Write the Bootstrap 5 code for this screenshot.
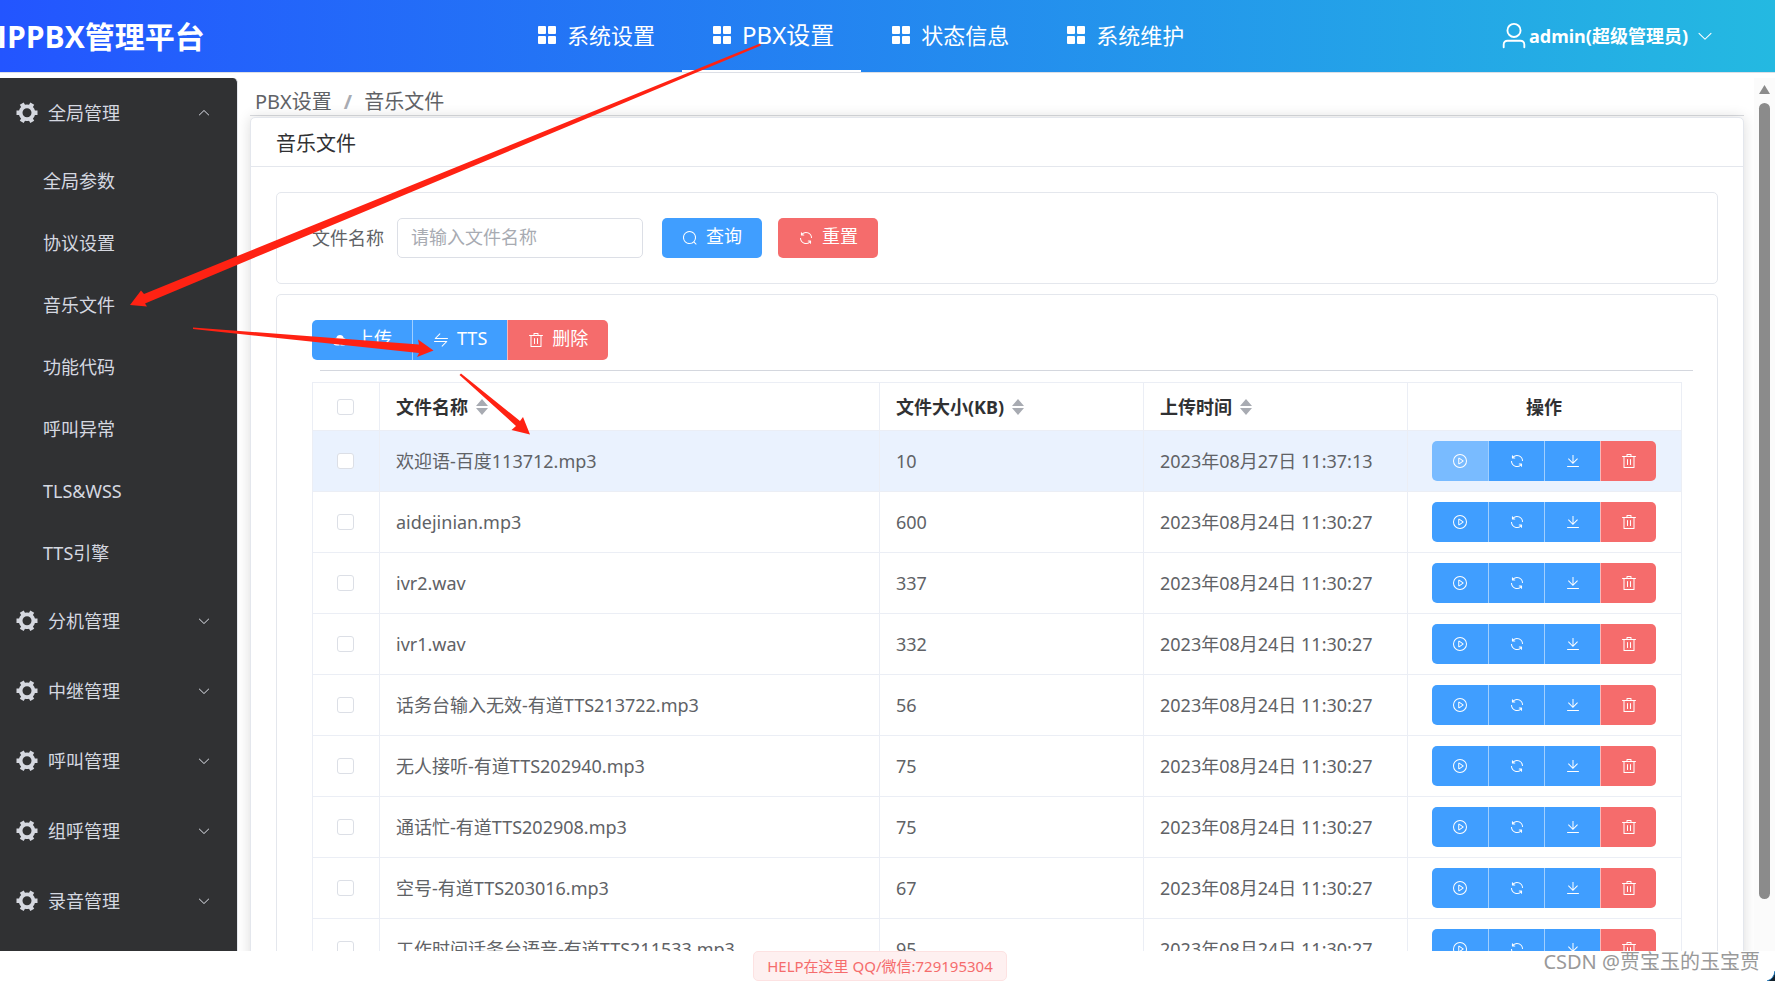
<!DOCTYPE html>
<html lang="zh-CN">
<head>
<meta charset="utf-8">
<meta name="viewport" content="width=device-width, initial-scale=1">
<title>IPPBX管理平台</title>
<link rel="stylesheet" href="https://cdn.jsdelivr.net/npm/bootstrap@5.3.0/dist/css/bootstrap.min.css">
<style>
  :root { --line: #e4e7ed; --blue: #409eff; --red: #f56c6c; --txt: #606266; --dark: #303133; }
  body { font: 18px/24px "Noto Sans", "Noto Sans CJK SC", sans-serif; color: var(--txt); overflow: hidden; background: #fff; }
  svg { fill: currentColor; flex: none; display: block; }
  .ic { width: 18px; height: 18px; }
  .ic-sm { width: 16px; height: 16px; }
  a { text-decoration: none; color: inherit; }

  .topbar { height: 73px; background: linear-gradient(90deg, #2355ff, #24b9e1); border-bottom: 1px solid #dcdfe6; color: #fff; padding-right: 61px; flex: none; }
  .brand { font-family: "Open Sans", "Noto Sans CJK SC", sans-serif; font-size: 30px; line-height: 40px; font-weight: 700; margin-left: -3px; width: 510px; padding-top: 2px; white-space: nowrap; }
  .topnav { font-size: 22px; }
  .topnav a { color: #fff; padding: 0 27px 0 31px; gap: 11px; border-bottom: 2px solid transparent; white-space: nowrap; }
  .topnav a.active { font-size: 24px; border-color: #fff; }
  .user { background: none; border: 0; color: #fff; font-weight: 700; padding: 0; }
  .user .face { width: 30px; height: 30px; }

  .side { width: 238px; background: var(--dark); color: #d5d8e0; border-right: 1px solid var(--line); border-top-right-radius: 5px; overflow: hidden; flex: none; }
  .side button { height: 70px; width: 100%; background: none; border: 0; color: inherit; padding: 0 26px 0 15px; text-align: left; gap: 9px; }
  .side .gear { width: 24px; height: 24px; }
  .side .chev { width: 14px; height: 14px; }
  .side ul { padding: 2px 0; }
  .side li a { display: flex; align-items: center; height: 62px; padding-left: 43px; }

  .crumbs { font-size: 20px; line-height: 28px; padding: 10px 0 0 5px; height: 38px; border-bottom: 1px solid #dadce0; margin-bottom: 1px; }
  .crumbs .breadcrumb-item + .breadcrumb-item { padding-left: 12px; }
  .crumbs .breadcrumb-item + .breadcrumb-item::before { color: #a8abb2; font-weight: 700; padding-right: 12px; }
  .panel { border: 1px solid var(--line); border-radius: 5px; background: #fff; }
  .outer { box-shadow: 0 0 14px rgba(0,0,0,.14); }
  .outer > h1 { font-size: 20px; line-height: 28px; color: var(--dark); font-weight: 400; padding: 12px 25px 8px; margin: 0; border-bottom: 1px solid var(--line); }
  .outer-body { padding: 25px; }
  .searchbox { height: 92px; padding: 0 35px; margin-bottom: 10px; }
  .searchbox input { width: 246px; height: 40px; font-size: 18px; border: 1px solid #dcdfe6; border-radius: 5px; padding: 0 13px 3px; margin: 0 19px 0 13px; color: var(--txt); }
  .searchbox input::placeholder { color: #a8abb2; }
  .act { height: 40px; border: 0; border-radius: 5px; color: #fff; font-size: 18px; line-height: 24px; padding: 0 20px; background: var(--blue); display: inline-flex; align-items: center; gap: 8px; white-space: nowrap; }
  .act:hover { color: #fff; background: #79bbff; }
  .act.del, .act.del:hover { background: var(--red); }
  .act span { padding-bottom: 4px; }
  .btn-group .act + .act { border-left: 1px solid rgba(255,255,255,.5); margin-left: 0; }
  .btn-group .act { flex: none; }

  .listing { padding: 25px 35px; }
  .listing hr { margin: 10px -11px 11px 8px; border-color: #d4d7de; opacity: 1; }
  .files { width: 100%; table-layout: fixed; border-collapse: collapse; }
  .files th, .files td { border: 1px solid #ebeef5; padding: 0 16px; white-space: nowrap; }
  .files th { height: 48px; color: var(--dark); }
  .files td { height: 61px; }
  .files tr.current td { background: #eaf2fe; }
  .files .tick, .files .ops { text-align: center; padding: 0 1px 0 0; }
  .files input { appearance: none; display: block; width: 17px; height: 16px; border: 1px solid #dcdfe6; border-radius: 3px; background: #fff; margin: 0 auto; }
  .files .act { padding: 0 20px; width: 56px; border-radius: 0; }
  .files .act:first-child { border-radius: 5px 0 0 5px; }
  .files .act:last-child { border-radius: 0 5px 5px 0; }
  .files tr.current .act:first-child { background: #79bbff; }
  .sort { width: 12px; height: 16px; color: #a8abb2; }

  .work { padding-top: 5px; }
  .content { padding: 0 10px 0 12px; }
  .scroller { width: 21px; background: #fbfbfb; padding: 7px 1px 0 0; gap: 9px; color: #8b8b8b; flex: none; }
  .scroller i { width: 11px; flex: 1; border-radius: 6px; background: #8b8b8b; margin-bottom: 52px; }
  .foot { height: 30px; flex: none; padding-right: 15px; }
  .help { border: 1px solid #fde2e2; background: #fef0f0; color: var(--red); font-size: 15px; line-height: 28px; border-radius: 5px; padding: 0 13px; }
  .stamp { position: absolute; right: 15px; bottom: 5px; font-size: 20px; line-height: 28px; color: #999; }
  .marks { position: absolute; left: 0; top: 0; pointer-events: none; fill: #ff2213; }
  .nook { position: absolute; right: 0; bottom: 0; }
</style>
</head>
<body class="vh-100 d-flex flex-column position-relative">

<svg class="d-none" aria-hidden="true">
  <symbol id="i-grid" viewBox="0 0 18 18"><rect width="8" height="8" rx="1"/><rect x="10" width="8" height="8" rx="1"/><rect y="10" width="8" height="8" rx="1"/><rect x="10" y="10" width="8" height="8" rx="1"/></symbol>
  <symbol id="i-down" viewBox="0 0 1024 1024"><path d="M831.872 340.864 512 652.672 192.128 340.864a30.592 30.592 0 0 0-42.752 0 29.12 29.12 0 0 0 0 41.6L489.664 714.24a32 32 0 0 0 44.672 0l340.288-331.712a29.12 29.12 0 0 0 0-41.728 30.592 30.592 0 0 0-42.752 0z"/></symbol>
  <symbol id="i-up" viewBox="0 0 1024 1024"><path transform="matrix(1 0 0 -1 0 1024)" d="M831.872 340.864 512 652.672 192.128 340.864a30.592 30.592 0 0 0-42.752 0 29.12 29.12 0 0 0 0 41.6L489.664 714.24a32 32 0 0 0 44.672 0l340.288-331.712a29.12 29.12 0 0 0 0-41.728 30.592 30.592 0 0 0-42.752 0z"/></symbol>
  <symbol id="i-search" viewBox="0 0 1024 1024"><path d="m795.904 750.72 124.992 124.928a32 32 0 0 1-45.248 45.248L750.656 795.904a416 416 0 1 1 45.248-45.248zM480 832a352 352 0 1 0 0-704 352 352 0 0 0 0 704z"/></symbol>
  <symbol id="i-delete" viewBox="0 0 1024 1024"><path d="M160 256H96a32 32 0 0 1 0-64h256V95.936a32 32 0 0 1 32-32h256a32 32 0 0 1 32 32V192h256a32 32 0 1 1 0 64h-64v672a32 32 0 0 1-32 32H192a32 32 0 0 1-32-32V256zm448-64v-64H416v64h192zM224 896h576V256H224v640zm192-128a32 32 0 0 1-32-32V416a32 32 0 0 1 64 0v320a32 32 0 0 1-32 32zm192 0a32 32 0 0 1-32-32V416a32 32 0 0 1 64 0v320a32 32 0 0 1-32 32z"/></symbol>
  <symbol id="i-refresh" viewBox="0 0 1024 1024"><path d="M771.776 794.88A384 384 0 0 1 128 512h64a320 320 0 0 0 555.712 216.448H654.72a32 32 0 1 1 0-64h149.056a32 32 0 0 1 32 32v148.928a32 32 0 1 1-64 0v-50.56zM276.288 295.616h92.992a32 32 0 0 1 0 64H220.16a32 32 0 0 1-32-32V178.56a32 32 0 0 1 64 0v50.56A384 384 0 0 1 896.128 512h-64a320 320 0 0 0-555.776-216.384z"/></symbol>
  <symbol id="i-play" viewBox="0 0 1024 1024"><path d="M512 64a448 448 0 1 1 0 896 448 448 0 0 1 0-896zm0 832a384 384 0 0 0 0-768 384 384 0 0 0 0 768zm-48-247.616L668.608 512 464 375.616v272.768zm10.624-342.656 249.472 166.336a48 48 0 0 1 0 79.872L474.624 718.272A48 48 0 0 1 400 678.336V345.6a48 48 0 0 1 74.624-39.936z"/></symbol>
  <symbol id="i-download" viewBox="0 0 1024 1024"><path d="M160 832h704a32 32 0 1 1 0 64H160a32 32 0 1 1 0-64zm384-253.696 236.288-236.352 45.248 45.248L508.8 704 192 387.2l45.248-45.248L480 584.704V128h64v450.304z"/></symbol>
  <symbol id="i-user" viewBox="0 0 1024 1024"><path d="M512 512a192 192 0 1 0 0-384 192 192 0 0 0 0 384zm0 64a256 256 0 1 1 0-512 256 256 0 0 1 0 512zm320 320v-96a96 96 0 0 0-96-96H288a96 96 0 0 0-96 96v96a32 32 0 1 1-64 0v-96a160 160 0 0 1 160-160h448a160 160 0 0 1 160 160v96a32 32 0 1 1-64 0z"/></symbol>
  <symbol id="i-switch" viewBox="0 0 1024 1024"><path d="M118.656 438.656a32 32 0 0 1 0-45.248L416 96l4.48-3.776A32 32 0 0 1 461.248 96l3.712 4.48a32.064 32.064 0 0 1-3.712 40.832L218.56 384H928a32 32 0 1 1 0 64H141.248a32 32 0 0 1-22.592-9.344zM64 608a32 32 0 0 1 32-32h786.752a32 32 0 0 1 22.656 54.592L608 928l-4.48 3.776a32.064 32.064 0 0 1-40.832-49.024L805.632 640H96a32 32 0 0 1-32-32z"/></symbol>
  <symbol id="i-gear" viewBox="0 0 1024 1024"><path d="M764.416 254.72a351.68 351.68 0 0 1 86.336 149.184H960v192.064H850.752a351.68 351.68 0 0 1-86.336 149.312l54.72 94.72-166.272 96-54.592-94.72a352.64 352.64 0 0 1-172.48 0L371.136 936l-166.272-96 54.72-94.72a351.68 351.68 0 0 1-86.336-149.312H64v-192h109.248a351.68 351.68 0 0 1 86.336-149.312L204.8 160l166.208-96h.192l54.656 94.592a352.64 352.64 0 0 1 172.48 0L652.8 64h.128L819.2 160l-54.72 94.72zM704 499.968a192 192 0 1 0-384 0 192 192 0 0 0 384 0z"/></symbol>
  <symbol id="i-cloud" viewBox="0 0 1024 1024"><path d="M544 864V672h128L512 480 352 672h128v192H320v-1.6c-5.376.32-10.496 1.6-16 1.6A240 240 0 0 1 64 624c0-123.136 93.12-223.488 212.608-237.248A239.808 239.808 0 0 1 512 192a239.872 239.872 0 0 1 235.456 194.752c119.488 13.76 212.48 114.112 212.48 237.248a240 240 0 0 1-240 240c-5.376 0-10.56-1.28-16-1.6v1.6H544z"/></symbol>
  <symbol id="i-sort" viewBox="0 0 12 16"><path d="M0 7 6 0l6 7zM0 9h12l-6 7z"/></symbol>
</svg>

<header class="topbar d-flex align-items-stretch">
  <div class="brand align-self-center">IPPBX管理平台</div>
  <nav class="topnav d-flex me-auto">
    <a href="#" class="d-flex align-items-center"><svg class="ic"><use href="#i-grid"/></svg>系统设置</a>
    <a href="#" class="d-flex align-items-center active" aria-current="page"><svg class="ic"><use href="#i-grid"/></svg>PBX设置</a>
    <a href="#" class="d-flex align-items-center"><svg class="ic"><use href="#i-grid"/></svg>状态信息</a>
    <a href="#" class="d-flex align-items-center"><svg class="ic"><use href="#i-grid"/></svg>系统维护</a>
  </nav>
  <button type="button" class="user d-flex align-items-center"><svg class="face"><use href="#i-user"/></svg>admin(超级管理员)<svg class="ic ms-2"><use href="#i-down"/></svg></button>
</header>

<div class="work d-flex flex-fill overflow-hidden">
  <aside class="side">
    <button type="button" class="d-flex align-items-center" aria-expanded="true"><svg class="gear"><use href="#i-gear"/></svg><span class="flex-fill">全局管理</span><svg class="chev"><use href="#i-up"/></svg></button>
    <ul class="list-unstyled m-0">
      <li><a href="#">全局参数</a></li>
      <li><a href="#">协议设置</a></li>
      <li><a href="#">音乐文件</a></li>
      <li><a href="#">功能代码</a></li>
      <li><a href="#">呼叫异常</a></li>
      <li><a href="#">TLS&amp;WSS</a></li>
      <li><a href="#">TTS引擎</a></li>
    </ul>
    <button type="button" class="d-flex align-items-center"><svg class="gear"><use href="#i-gear"/></svg><span class="flex-fill">分机管理</span><svg class="chev"><use href="#i-down"/></svg></button>
    <button type="button" class="d-flex align-items-center"><svg class="gear"><use href="#i-gear"/></svg><span class="flex-fill">中继管理</span><svg class="chev"><use href="#i-down"/></svg></button>
    <button type="button" class="d-flex align-items-center"><svg class="gear"><use href="#i-gear"/></svg><span class="flex-fill">呼叫管理</span><svg class="chev"><use href="#i-down"/></svg></button>
    <button type="button" class="d-flex align-items-center"><svg class="gear"><use href="#i-gear"/></svg><span class="flex-fill">组呼管理</span><svg class="chev"><use href="#i-down"/></svg></button>
    <button type="button" class="d-flex align-items-center"><svg class="gear"><use href="#i-gear"/></svg><span class="flex-fill">录音管理</span><svg class="chev"><use href="#i-down"/></svg></button>
  </aside>

  <main class="content flex-fill overflow-hidden">
    <nav class="crumbs" aria-label="breadcrumb">
      <ol class="breadcrumb m-0">
        <li class="breadcrumb-item"><a href="#">PBX设置</a></li>
        <li class="breadcrumb-item">音乐文件</li>
      </ol>
    </nav>
    <section class="panel outer">
      <h1>音乐文件</h1>
      <div class="outer-body">
        <form class="panel searchbox d-flex align-items-center">
          <label for="fname">文件名称</label>
          <input id="fname" type="text" placeholder="请输入文件名称">
          <button type="button" class="act me-3"><svg class="ic-sm"><use href="#i-search"/></svg><span>查询</span></button>
          <button type="button" class="act del"><svg class="ic-sm"><use href="#i-refresh"/></svg><span>重置</span></button>
        </form>
        <div class="panel listing">
          <div class="btn-group d-flex">
            <button type="button" class="act rounded-end-0"><svg class="ic-sm"><use href="#i-cloud"/></svg><span>上传</span></button>
            <button type="button" class="act rounded-0"><svg class="ic-sm"><use href="#i-switch"/></svg><span>TTS</span></button>
            <button type="button" class="act del rounded-start-0"><svg class="ic-sm"><use href="#i-delete"/></svg><span>删除</span></button>
          </div>
          <hr>
          <table class="files">
            <colgroup><col style="width:67px"><col><col style="width:264px"><col style="width:264px"><col style="width:274px"></colgroup>
            <thead>
              <tr>
                <th class="tick"><input type="checkbox" aria-label="全选"></th>
                <th><span class="d-flex align-items-center gap-2">文件名称<svg class="sort"><use href="#i-sort"/></svg></span></th>
                <th><span class="d-flex align-items-center gap-2">文件大小(KB)<svg class="sort"><use href="#i-sort"/></svg></span></th>
                <th><span class="d-flex align-items-center gap-2">上传时间<svg class="sort"><use href="#i-sort"/></svg></span></th>
                <th class="ops">操作</th>
              </tr>
            </thead>
            <tbody id="rows"></tbody>
          </table>
        </div>
      </div>
    </section>
  </main>
  <div class="scroller d-flex flex-column align-items-center">
    <svg width="11" height="9" viewBox="0 0 11 9"><path d="M5.500 0 11 9H0z"/></svg>
    <i></i>
  </div>
</div>

<footer class="foot d-flex justify-content-center">
  <a href="#" class="help">HELP在这里 QQ/微信:729195304</a>
</footer>
<div class="stamp">CSDN @贾宝玉的玉宝贾</div>
<svg class="nook" width="8" height="10" viewBox="0 0 8 10" aria-hidden="true"><path fill="#12202c" d="M8 0Q7 8 0 10H8z"/><path fill="none" stroke="#1673b8" d="M8 0Q7 8 0 10"/></svg>

<svg class="marks" width="1775" height="981" viewBox="0 0 1775 981" aria-hidden="true">
  <path d="M760 43.500 144 294 141 290.500 130 305 147 306.500 145 303.500 761 45.500z"/>
  <path d="M193 327.500 419 344.500 418 339.500 433.500 350.500 417 357 419 353 193 329z"/>
  <path d="M461 373.500 520 421 523 417 530 434.500 511.500 430 516 426 459.500 375z"/>
</svg>

<script>
  const files = [
    ["欢迎语-百度113712.mp3", 10, "2023年08月27日 11:37:13"],
    ["aidejinian.mp3", 600, "2023年08月24日 11:30:27"],
    ["ivr2.wav", 337, "2023年08月24日 11:30:27"],
    ["ivr1.wav", 332, "2023年08月24日 11:30:27"],
    ["话务台输入无效-有道TTS213722.mp3", 56, "2023年08月24日 11:30:27"],
    ["无人接听-有道TTS202940.mp3", 75, "2023年08月24日 11:30:27"],
    ["通话忙-有道TTS202908.mp3", 75, "2023年08月24日 11:30:27"],
    ["空号-有道TTS203016.mp3", 67, "2023年08月24日 11:30:27"],
    ["工作时间话务台语音-有道TTS211533.mp3", 95, "2023年08月24日 11:30:27"]
  ];
  const ops = [["play", "播放"], ["refresh", "刷新"], ["download", "下载"], ["delete", "删除"]];
  const buttons = ops.map(([id, label]) =>
    `<button type="button" class="act${id === "delete" ? " del" : ""}" aria-label="${label}"><svg class="ic-sm"><use href="#i-${id}"/></svg></button>`).join("");
  document.getElementById("rows").innerHTML = files.map(([name, size, time], i) =>
    `<tr${i ? "" : ' class="current"'}><td class="tick"><input type="checkbox" aria-label="${name}"></td><td>${name}</td><td>${size}</td><td>${time}</td><td class="ops"><div class="btn-group">${buttons}</div></td></tr>`).join("");
</script>
<script src="https://cdn.jsdelivr.net/npm/bootstrap@5.3.0/dist/js/bootstrap.bundle.min.js"></script>
</body>
</html>
